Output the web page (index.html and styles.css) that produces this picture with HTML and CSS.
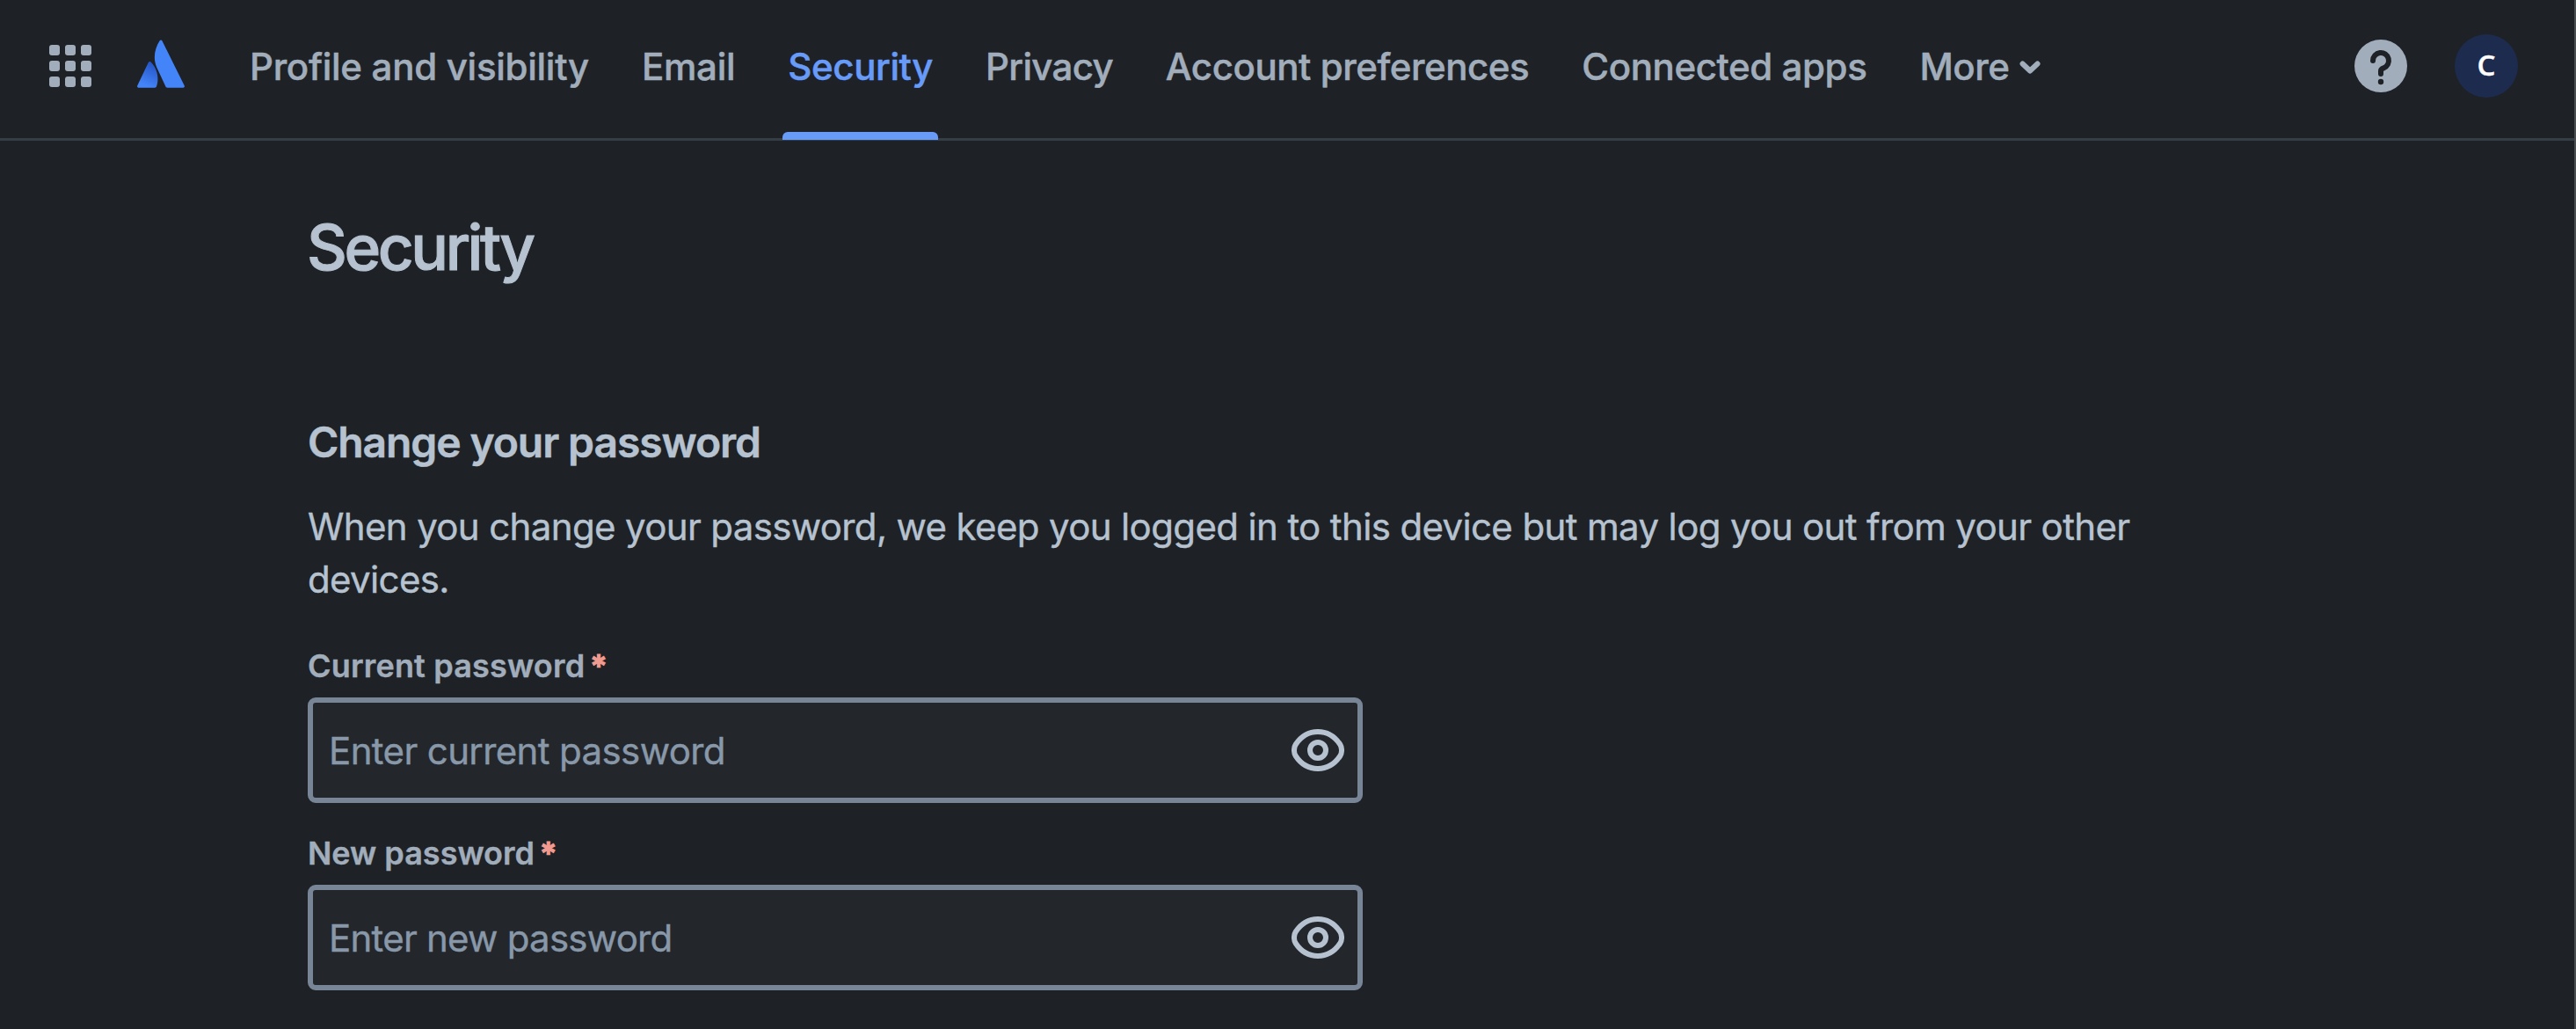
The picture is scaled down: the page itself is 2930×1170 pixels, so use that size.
FILE: index.html
```html
<!DOCTYPE html>
<html lang="en">
<head>
<meta charset="utf-8">
<title>Security</title>
<link rel="stylesheet" href="styles.css">
</head>
<body>
<div class="page">
  <header class="header">
    <button class="switcher" aria-label="Switch apps">
      <i></i><i></i><i></i><i></i><i></i><i></i><i></i><i></i><i></i>
    </button>
    <a class="logo" href="#" aria-label="Home">
      <svg width="54" height="55" viewBox="48 45 162 165">
        <defs>
          <linearGradient id="fade" gradientUnits="userSpaceOnUse" x1="104" y1="128" x2="72" y2="200">
            <stop offset="0" stop-color="#2456c8"/>
            <stop offset="1" stop-color="#4484f9"/>
          </linearGradient>
        </defs>
        <path fill="url(#fade)" d="M96 123c-3-4-7-4-10 1L49 202c-2 4 0 7 4 7h55c3 0 5-1 6-4 7-20 8-54-18-82z"/>
        <path fill="#4484f9" d="M125 49c-17 26-24 60-10 91l30 65c1 3 3 4 6 4h54c4 0 6-3 4-7L133 49c-2-3-6-3-8 0z"/>
      </svg>
    </a>
    <nav class="tabs">
      <a class="tab tab-profile" href="#">Profile and visibility</a>
      <a class="tab tab-email" href="#">Email</a>
      <a class="tab tab-active" href="#">Security</a>
      <a class="tab tab-privacy" href="#">Privacy</a>
      <a class="tab tab-prefs" href="#">Account preferences</a>
      <a class="tab" href="#">Connected apps</a>
      <a class="tab tab-more" href="#">More
        <svg class="chevron" width="24" height="16" viewBox="0 0 24 16" fill="none" stroke="currentColor" stroke-width="6" stroke-linecap="round" stroke-linejoin="round"><path d="M3.500 3.500 12 11.500l8.500-8"/></svg>
      </a>
    </nav>
    <div class="actions">
      <button class="help" aria-label="Help">
        <svg width="60" height="60" viewBox="0 0 60 60">
          <circle cx="30" cy="30" r="30" fill="#a1adbb"/>
          <path d="M21 24a9 9 0 1 1 12.200 8.400C31 33.200 30 33.800 30 35.500V39" fill="none" stroke="#1e2226" stroke-width="6" stroke-linecap="round"/>
          <circle cx="30" cy="48" r="3.200" fill="#1e2226"/>
        </svg>
      </button>
      <span class="avatar">C</span>
    </div>
  </header>
  <main class="main">
    <h1 class="title">Security</h1>
    <h2 class="subtitle">Change your password</h2>
    <p class="intro">When you change your password, we keep you logged in to this device but may log you out from your other devices.</p>
    <form class="form">
      <div class="group">
        <label class="label" for="current">Current password<span class="required">*</span></label>
        <div class="field">
          <input class="input" id="current" type="password" placeholder="Enter current password">
          <svg class="eye" width="60" height="48" viewBox="0 0 60 48" fill="none" stroke="currentColor" stroke-width="6"><path d="M30 3C42 3 50 9.500 55.300 17.500 57.600 21 57.600 27 55.300 30.500 50 38.500 42 45 30 45S10 38.500 4.700 30.500C2.400 27 2.400 21 4.700 17.500 10 9.500 18 3 30 3z"/><circle cx="30" cy="24" r="9"/></svg>
        </div>
      </div>
      <div class="group">
        <label class="label label-new" for="new">New password<span class="required">*</span></label>
        <div class="field">
          <input class="input input-new" id="new" type="password" placeholder="Enter new password">
          <svg class="eye" width="60" height="48" viewBox="0 0 60 48" fill="none" stroke="currentColor" stroke-width="6"><path d="M30 3C42 3 50 9.500 55.300 17.500 57.600 21 57.600 27 55.300 30.500 50 38.500 42 45 30 45S10 38.500 4.700 30.500C2.400 27 2.400 21 4.700 17.500 10 9.500 18 3 30 3z"/><circle cx="30" cy="24" r="9"/></svg>
        </div>
      </div>
    </form>
  </main>
</div>
</body>
</html>
```
FILE: styles.css
```css
* { box-sizing: border-box; }
body {
  margin: 0;
  background: #1e2226;
  color: #b6c2cf;
  font-family: Inter, "Liberation Sans", sans-serif;
  font-size: 42px;
}
button { padding: 0; border: 0; background: none; }
svg { display: block; }
.page {
  height: 1170px;
  border-right: 2px solid #4b4e51;
  overflow: hidden;
}
.header {
  display: flex;
  align-items: center;
  height: 160px;
  padding: 0 64px 7px 56px;
  border-bottom: 3px solid #353d45;
}
.switcher {
  display: grid;
  grid-template-columns: repeat(3, 12px);
  grid-auto-rows: 12px;
  gap: 6px;
}
.switcher i { border-radius: 3px; background: #a1adbb; }
.logo { margin: -5px 68px 0 52px; }
.tabs { display: flex; gap: 48px; }
.tab {
  position: relative;
  padding: 2px 6px 0;
  color: #a1adbb;
  font-weight: 500;
  line-height: 150px;
  letter-spacing: -0.4px;
  text-decoration: none;
  white-space: nowrap;
  -webkit-text-stroke: 0.5px currentColor;
}
.tab-profile { letter-spacing: -0.28px; }
.tab-email { letter-spacing: -0.25px; }
.tab-privacy { letter-spacing: -0.7px; }
.tab-prefs { letter-spacing: -0.44px; }
.tab-active { color: #689bf8; }
.tab-active::after {
  content: "";
  position: absolute;
  left: 0;
  right: 0;
  bottom: -8px;
  height: 9px;
  border-radius: 6px 6px 0 0;
  background: #689bf8;
}
.tab-more { display: flex; align-items: center; gap: 11px; }
.chevron { margin-top: 2px; }
.actions {
  display: flex;
  align-items: center;
  gap: 54px;
  margin-left: auto;
}
.avatar {
  width: 72px;
  height: 72px;
  border-radius: 50%;
  background: #1d2b4e;
  color: #fff;
  font: 600 33px/70px "Open Sans", "Noto Sans", sans-serif;
  text-align: center;
  -webkit-text-stroke: 0.4px currentColor;
}
.main { width: 2550px; padding: 79px 0 0 350px; }
.title, .subtitle, .intro { margin: 0; }
.title {
  margin-left: -1px;
  font-size: 71px;
  font-weight: 500;
  line-height: 84px;
  letter-spacing: -3.4px;
  -webkit-text-stroke: 1px currentColor;
}
.subtitle {
  margin-top: 150px;
  font-size: 48px;
  font-weight: 600;
  line-height: 60px;
  letter-spacing: -1.1px;
  -webkit-text-stroke: 0.5px currentColor;
}
.intro {
  margin-top: 36px;
  line-height: 60px;
  letter-spacing: -0.635px;
  -webkit-text-stroke: 0.4px currentColor;
}
.form {
  display: flex;
  flex-direction: column;
  gap: 33px;
  width: 1200px;
  margin-top: 44px;
}
.group { display: flex; flex-direction: column; gap: 12px; }
.label {
  color: #a1adbb;
  font-size: 36px;
  font-weight: 600;
  line-height: 48px;
  letter-spacing: 0.18px;
  -webkit-text-stroke: 0.4px currentColor;
}
.label-new { letter-spacing: 0; }
.required {
  margin-left: 6px;
  color: #f09a90;
  -webkit-text-stroke: 1.2px currentColor;
}
.field {
  display: flex;
  align-items: center;
  height: 120px;
  padding: 0 15px 0 18px;
  border: 6px solid #778597;
  border-radius: 9px;
  background: #23272c;
}
.input {
  flex: 1;
  height: 60px;
  padding: 0;
  border: 0;
  outline: 0;
  background: none;
  color: inherit;
  font: inherit;
  letter-spacing: -0.62px;
}
.input-new { letter-spacing: -0.75px; }
.input::placeholder {
  color: #8898a9;
  opacity: 1;
  -webkit-text-stroke: 0.4px currentColor;
}
.eye { color: #b6c2cf; }
```
